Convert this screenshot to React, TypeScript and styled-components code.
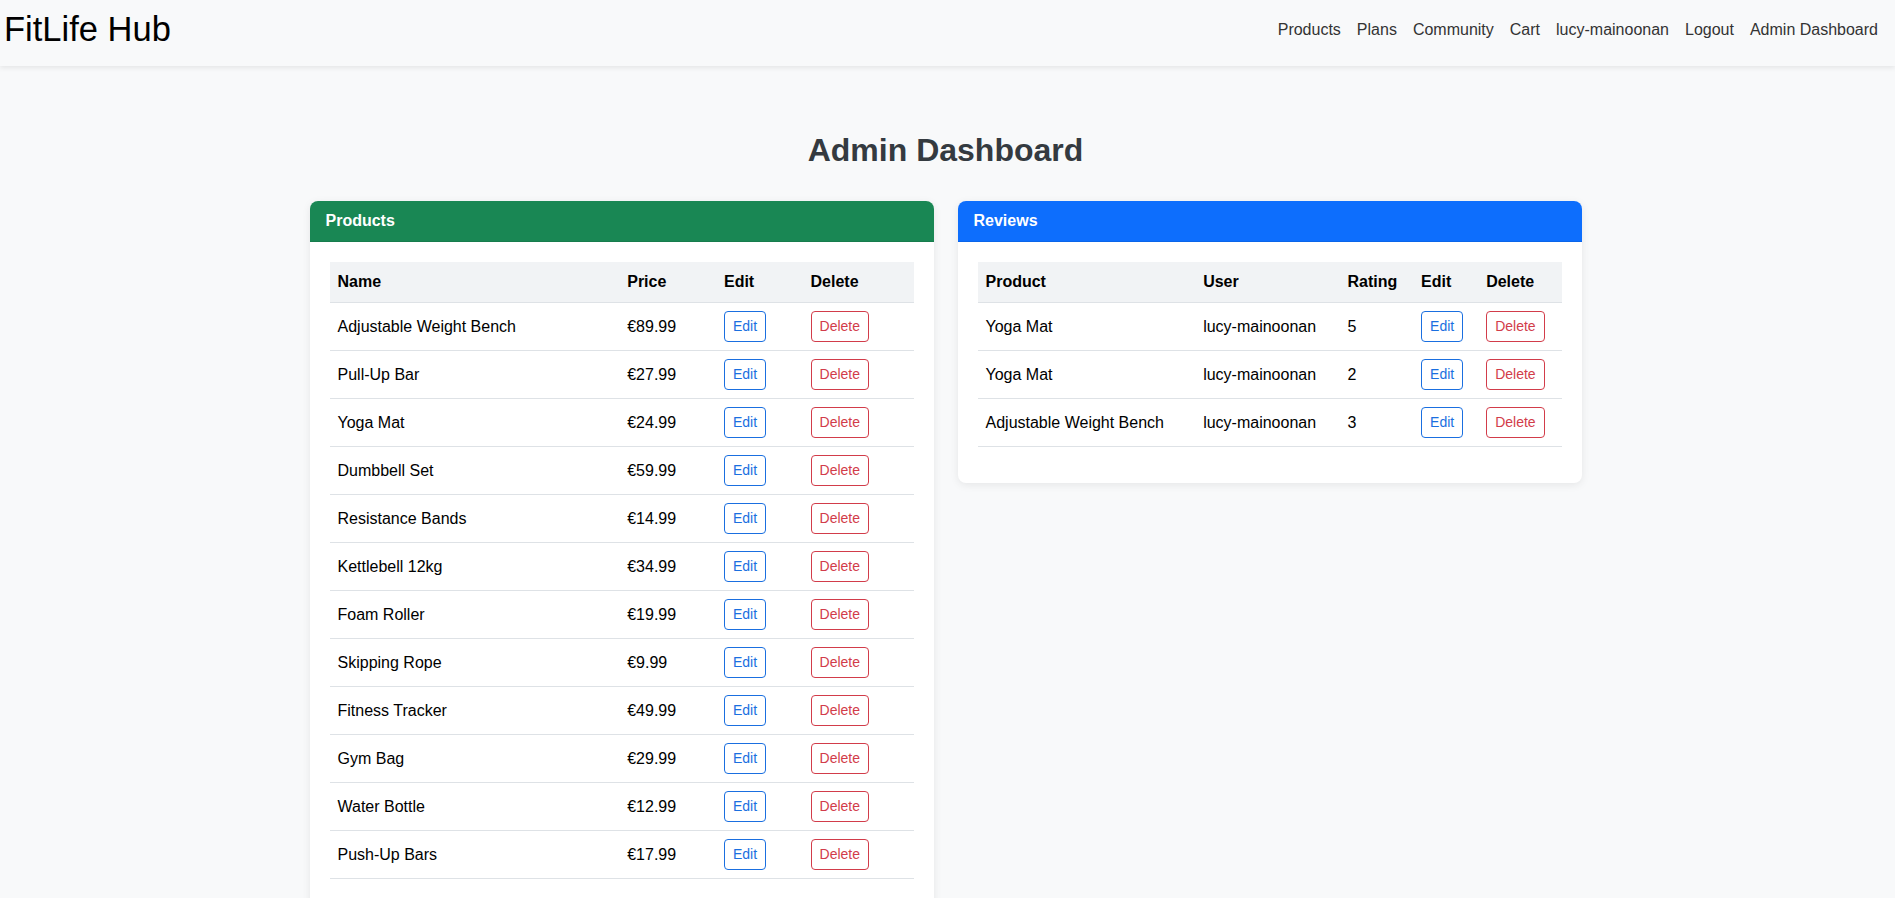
import React from "react";
import styled, { createGlobalStyle } from "styled-components";

const GlobalStyle = createGlobalStyle`
  html { scrollbar-width: none; }
  html::-webkit-scrollbar { display: none; }
  body {
    margin: 0;
    background: #f8f9fa;
    font-family: "Liberation Sans", Arial, sans-serif;
    color: #212529;
    font-size: 16px;
    line-height: 1.5;
  }
  * { box-sizing: border-box; }
`;

const NavBar = styled.nav`
  height: 66px;
  padding: 0 9px 6px 4px;
  display: flex;
  align-items: center;
  justify-content: space-between;
  background: #f8f9fa;
  box-shadow: 0 2px 5px rgba(0, 0, 0, 0.08);
  position: relative;
  z-index: 1;
`;

const Brand = styled.a`
  font-size: 34.5px;
  line-height: 1.2;
  color: #000;
  text-decoration: none;
`;

const NavList = styled.ul`
  display: flex;
  list-style: none;
  margin: 0;
  padding: 0;
`;

const NavLink = styled.a`
  display: block;
  padding: 0 8px;
  font-size: 16px;
  color: #333;
  text-decoration: none;
`;

const Main = styled.main`
  padding: 65px 4px 40px 0;
`;

const Title = styled.h2`
  margin: 0 0 32px;
  text-align: center;
  font-size: 32px;
  line-height: 1.2;
  font-weight: 700;
  color: #343a40;
`;

const Grid = styled.div`
  max-width: 1272px;
  margin: 0 auto;
  display: grid;
  grid-template-columns: 1fr 1fr;
  gap: 24px;
  align-items: start;
`;

const Card = styled.section`
  background: #fff;
  border-radius: 8px;
  box-shadow: 0 2px 8px rgba(0, 0, 0, 0.08);
  overflow: hidden;
`;

const CardHeader = styled.div<{ $tone: string }>`
  background: ${(p) => p.$tone};
  color: #fff;
  font-weight: 700;
  font-size: 16px;
  line-height: 24px;
  padding: 8px 16px;
  border-bottom: 1px solid rgba(0, 0, 0, 0.08);
`;

const CardBody = styled.div`
  padding: 20px;
`;

const Table = styled.table`
  width: 100%;
  border-collapse: collapse;
  margin-bottom: 16px;
`;

const Th = styled.th`
  text-align: left;
  font-weight: 700;
  padding: 8px;
  background: #f1f3f5;
  border-bottom: 1px solid #dee2e6;
  color: #000;
`;

const Td = styled.td`
  padding: 8px;
  vertical-align: middle;
  border-bottom: 1px solid #dee2e6;
  color: #000;
`;

const OutlineButton = styled.button<{ $color: string }>`
  font-family: inherit;
  font-size: 14px;
  line-height: 1.5;
  padding: 4px 8px;
  border: 1px solid ${(p) => p.$color};
  border-radius: 4px;
  background: transparent;
  color: ${(p) => p.$color};
  cursor: pointer;
  display: inline-block;
`;

const BLUE = "#1a6fe0";
const RED = "#d23c4a";

const products: [string, string][] = [
  ["Adjustable Weight Bench", "€89.99"],
  ["Pull-Up Bar", "€27.99"],
  ["Yoga Mat", "€24.99"],
  ["Dumbbell Set", "€59.99"],
  ["Resistance Bands", "€14.99"],
  ["Kettlebell 12kg", "€34.99"],
  ["Foam Roller", "€19.99"],
  ["Skipping Rope", "€9.99"],
  ["Fitness Tracker", "€49.99"],
  ["Gym Bag", "€29.99"],
  ["Water Bottle", "€12.99"],
  ["Push-Up Bars", "€17.99"],
];

const reviews: [string, string, number][] = [
  ["Yoga Mat", "lucy-mainoonan", 5],
  ["Yoga Mat", "lucy-mainoonan", 2],
  ["Adjustable Weight Bench", "lucy-mainoonan", 3],
];

const navItems = ["Products", "Plans", "Community", "Cart", "lucy-mainoonan", "Logout", "Admin Dashboard"];

export default function App() {
  return (
    <>
      <GlobalStyle />
      <NavBar>
        <Brand href="#">FitLife Hub</Brand>
        <NavList>
          {navItems.map((n) => (
            <li key={n}>
              <NavLink href="#">{n}</NavLink>
            </li>
          ))}
        </NavList>
      </NavBar>
      <Main>
        <Title>Admin Dashboard</Title>
        <Grid>
          <Card>
            <CardHeader $tone="#198754">Products</CardHeader>
            <CardBody>
              <Table>
                <thead>
                  <tr>
                    <Th>Name</Th>
                    <Th>Price</Th>
                    <Th>Edit</Th>
                    <Th>Delete</Th>
                  </tr>
                </thead>
                <tbody>
                  {products.map(([name, price]) => (
                    <tr key={name}>
                      <Td>{name}</Td>
                      <Td>{price}</Td>
                      <Td>
                        <OutlineButton $color={BLUE}>Edit</OutlineButton>
                      </Td>
                      <Td>
                        <OutlineButton $color={RED}>Delete</OutlineButton>
                      </Td>
                    </tr>
                  ))}
                </tbody>
              </Table>
            </CardBody>
          </Card>
          <Card>
            <CardHeader $tone="#0d6efd">Reviews</CardHeader>
            <CardBody>
              <Table>
                <thead>
                  <tr>
                    <Th>Product</Th>
                    <Th>User</Th>
                    <Th>Rating</Th>
                    <Th>Edit</Th>
                    <Th>Delete</Th>
                  </tr>
                </thead>
                <tbody>
                  {reviews.map(([p, u, r], i) => (
                    <tr key={i}>
                      <Td>{p}</Td>
                      <Td>{u}</Td>
                      <Td>{r}</Td>
                      <Td>
                        <OutlineButton $color={BLUE}>Edit</OutlineButton>
                      </Td>
                      <Td>
                        <OutlineButton $color={RED}>Delete</OutlineButton>
                      </Td>
                    </tr>
                  ))}
                </tbody>
              </Table>
            </CardBody>
          </Card>
        </Grid>
      </Main>
    </>
  );
}
